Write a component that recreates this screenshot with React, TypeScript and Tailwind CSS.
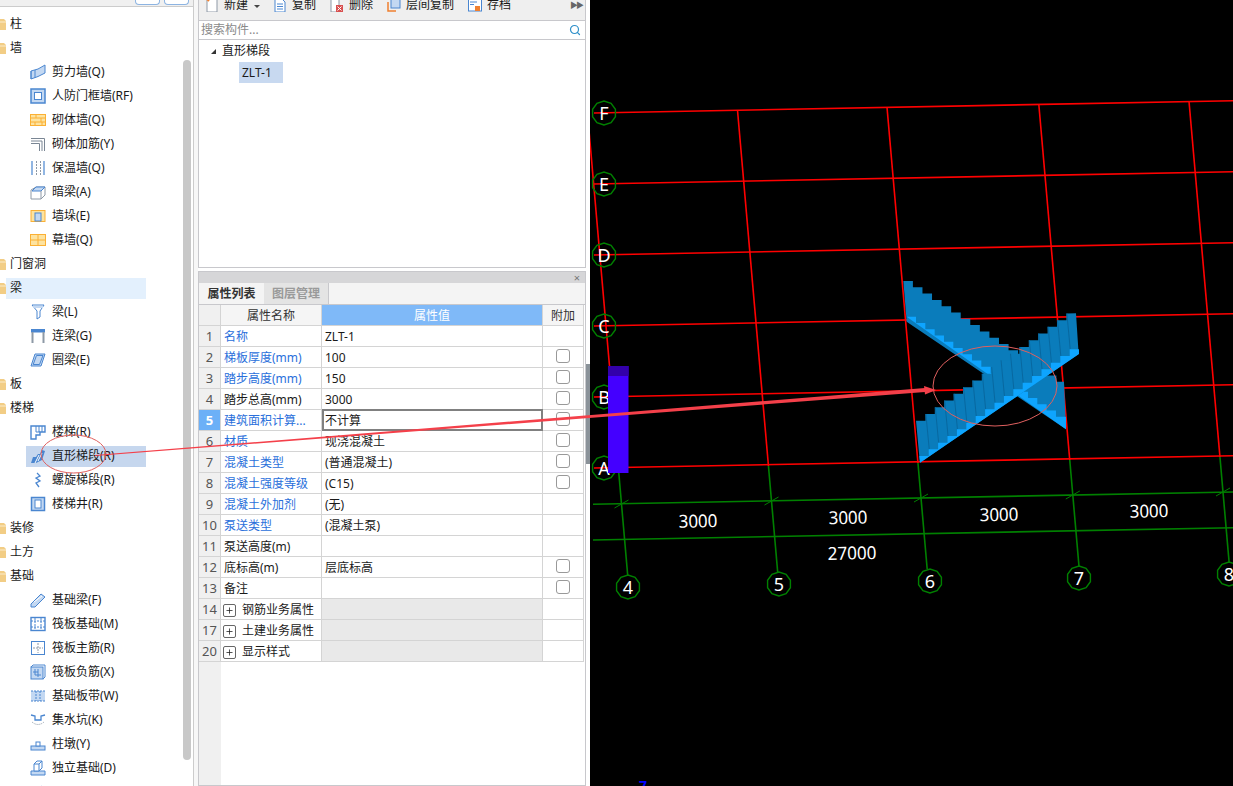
import React from 'react';
import { Search, Plus } from 'lucide-react';

const B = '#4a86d0';
const L = '#c3d8f2';
const Y = '#fbb034';
const P = '#fde3a0';
const G = '#8e99a6';

// little tree icons, all on a 16 box
const icons: Record<string, React.ReactNode> = {
  shear: <><path d="M1 7 Q8 6 15 1 V9 Q8 13 1 15Z" fill={L} stroke={B} /><path d="M1 7 V15 M5 6 V14" stroke={B} fill="none" /></>,
  door: <><rect x="1" y="1" width="14" height="14" fill={L} stroke={B} strokeWidth="1.5" /><rect x="4.5" y="4.5" width="7" height="7" fill="#fff" stroke={B} /></>,
  brick: <><rect x="0.5" y="2.5" width="15" height="11" fill={P} stroke={Y} /><path d="M1 6 H15 M1 10 H15 M6 3 V6 M11 6 V10 M5 10 V13 M12 10 V13" stroke={Y} fill="none" /></>,
  rebar: <path d="M1 2.5 H14.5 V15 M1 5 H12 V15 M1 7.5 H9.5 V15" stroke="#7a8694" fill="none" />,
  insul: <><path d="M2 1 V15 M14 1 V15" stroke={B} strokeWidth="1.2" fill="none" /><path d="M6.5 1 V15 M10.5 1 V15" stroke={G} strokeDasharray="2 1" fill="none" /></>,
  hidden: <><path d="M1 6 L6 3 H15 V11 L11 15 H1Z" fill="#fff" stroke={G} /><path d="M6 3 H15 L11 7 H2Z" fill={L} stroke={B} /><path d="M11 7 V15" stroke={G} /></>,
  pier: <><rect x="1" y="2.5" width="14" height="11" fill={P} stroke={Y} /><rect x="5" y="5" width="6" height="8" fill={L} stroke={B} /></>,
  curtain: <><rect x="0.5" y="2.5" width="15" height="11" fill={P} stroke={Y} /><path d="M1 8 H15 M8 3 V13" stroke={Y} /></>,
  beam: <><path d="M2 1 H14 L10 7 V13 L7 15 V7Z" fill="#fff" stroke={B} /><path d="M3 3 H13" stroke={L} strokeWidth="2" /></>,
  link: <><rect x="1" y="1" width="14" height="3.5" fill={B} /><path d="M2.5 4 V15 M13.5 4 V15" stroke={G} strokeWidth="2" /></>,
  ring: <path d="M5 2 H15 L11 14 H1Z M6.5 3.5 H13 L9.5 12.5 H3.2Z" fill={L} stroke={B} />,
  stair: <><path d="M1 2 H15 V8 H10 V11 H6 V15 H1Z" fill="#fff" stroke={B} strokeWidth="1.4" /><path d="M6 2 V8 H10 M9 2 V8 M12 2 V8" stroke={B} fill="none" /></>,
  straight: <><path d="M1 15 L3 9 H6 L8 6 H10 L12 2 L15 3 L12 12 L6 15Z" fill={B} /><path d="M5 15 L9 7 M8 13 L12 5" stroke="#fff" /></>,
  spiral: <path d="M7 1 L10 4 L6 6 L10 9 L6 11 L9 15" stroke={B} strokeWidth="1.3" fill="none" />,
  well: <><rect x="1.5" y="1.5" width="13" height="13" fill={L} stroke={B} strokeWidth="1.5" /><rect x="5" y="4" width="6" height="8" fill="#fff" stroke={B} /></>,
  found: <><path d="M1 12 L11 2 L15 5 L5 15 H1Z" fill={L} stroke={B} /><path d="M4 10 L12 4" stroke="#fff" /></>,
  raft: <><rect x="1" y="1.5" width="14" height="13" fill="#fff" stroke={B} strokeWidth="1.4" /><path d="M1 5 H15 M1 11 H15 M5 2 V14 M11 2 V14" stroke={B} strokeDasharray="2 1" /></>,
  main: <><rect x="1.5" y="1.5" width="13" height="13" fill="#fff" stroke={B} /><path d="M8 3 V13 M3 8 H13" stroke={G} strokeDasharray="2 1" /></>,
  neg: <><rect x="1" y="3" width="12" height="12" fill={L} stroke={B} /><path d="M1 3 L3 1 H15 V13 L13 15 M5 5 V11 H11 M8 5 V13 M3 8 H8" stroke={B} fill="none" /></>,
  strip: <><rect x="1" y="3" width="14" height="10" fill={L} /><path d="M1 3 H15 M1 13 H15 M6 3 V13 M10 3 V13" stroke={B} strokeDasharray="2 1" /></>,
  sump: <><path d="M1 3 L5 4 V8 H11 V4 L15 3" stroke={B} strokeWidth="1.3" fill="none" /><path d="M2 10 Q8 15 14 10" stroke={G} strokeDasharray="1 1" fill="none" /></>,
  cap: <><rect x="1" y="10" width="14" height="4" fill={L} stroke={B} /><rect x="6" y="6" width="4" height="4" fill="#fff" stroke={B} /></>,
  iso: <><path d="M1 11 H15 V15 H1Z" fill={L} stroke={B} /><path d="M4 11 V4 L7 1 H12 V8 L9 11Z M4 4 H9 V11 M9 4 L12 1" fill="#fff" stroke={B} /></>,
};

const tree: { t: string; i?: string; sel?: boolean; open?: boolean }[] = [
  { t: '柱' }, { t: '墙', open: true },
  { t: '剪力墙(Q)', i: 'shear' }, { t: '人防门框墙(RF)', i: 'door' }, { t: '砌体墙(Q)', i: 'brick' }, { t: '砌体加筋(Y)', i: 'rebar' },
  { t: '保温墙(Q)', i: 'insul' }, { t: '暗梁(A)', i: 'hidden' }, { t: '墙垛(E)', i: 'pier' }, { t: '幕墙(Q)', i: 'curtain' },
  { t: '门窗洞' }, { t: '梁', open: true, sel: true },
  { t: '梁(L)', i: 'beam' }, { t: '连梁(G)', i: 'link' }, { t: '圈梁(E)', i: 'ring' },
  { t: '板' }, { t: '楼梯', open: true },
  { t: '楼梯(R)', i: 'stair' }, { t: '直形梯段(R)', i: 'straight', sel: true }, { t: '螺旋梯段(R)', i: 'spiral' }, { t: '楼梯井(R)', i: 'well' },
  { t: '装修' }, { t: '土方' }, { t: '基础', open: true },
  { t: '基础梁(F)', i: 'found' }, { t: '筏板基础(M)', i: 'raft' }, { t: '筏板主筋(R)', i: 'main' }, { t: '筏板负筋(X)', i: 'neg' },
  { t: '基础板带(W)', i: 'strip' }, { t: '集水坑(K)', i: 'sump' }, { t: '柱墩(Y)', i: 'cap' }, { t: '独立基础(D)', i: 'iso' },
  { t: '', i: 'found' },
];

const rows: { n: number; name: string; val: string; blue?: boolean; check?: boolean; group?: boolean; active?: boolean }[] = [
  { n: 1, name: '名称', val: 'ZLT-1', blue: true },
  { n: 2, name: '梯板厚度(mm)', val: '100', blue: true, check: true },
  { n: 3, name: '踏步高度(mm)', val: '150', blue: true, check: true },
  { n: 4, name: '踏步总高(mm)', val: '3000', check: true },
  { n: 5, name: '建筑面积计算...', val: '不计算', blue: true, check: true, active: true },
  { n: 6, name: '材质', val: '现浇混凝土', blue: true, check: true },
  { n: 7, name: '混凝土类型', val: '(普通混凝土)', blue: true, check: true },
  { n: 8, name: '混凝土强度等级', val: '(C15)', blue: true, check: true },
  { n: 9, name: '混凝土外加剂', val: '(无)', blue: true },
  { n: 10, name: '泵送类型', val: '(混凝土泵)', blue: true },
  { n: 11, name: '泵送高度(m)', val: '' },
  { n: 12, name: '底标高(m)', val: '层底标高', check: true },
  { n: 13, name: '备注', val: '', check: true },
  { n: 14, name: '钢筋业务属性', val: '', group: true },
  { n: 17, name: '土建业务属性', val: '', group: true },
  { n: 20, name: '显示样式', val: '', group: true },
];

function Folder() {
  return (
    <svg width="6" height="12" viewBox="0 0 6 12" className="shrink-0">
      <path d="M0 1 H4 L6 3 V12 H0Z" fill="#f2cd85" />
      <path d="M0 4 H6" stroke="#fbeccb" />
    </svg>
  );
}

function TreeRow({ item }: { item: (typeof tree)[number] }) {
  if (!item.i) {
    return (
      <div className="h-6 flex items-center shrink-0">
        <Folder />
        <div className={`h-[21px] w-[140px] flex items-center pl-1 ${item.sel ? 'bg-[#e3f0fd]' : ''}`}>{item.t}</div>
      </div>
    );
  }
  return (
    <div className="h-6 flex items-center pl-[26px] shrink-0">
      <div className={`h-[21px] w-[120px] flex items-center gap-[6px] pl-1 whitespace-nowrap ${item.sel ? 'bg-[#c6d7ee]' : ''}`}>
        <svg width="16" height="16" viewBox="0 0 16 16" className="shrink-0">{icons[item.i]}</svg>
        <span>{item.t}</span>
      </div>
    </div>
  );
}

function ToolBtn({ icon, label, w }: { icon: React.ReactNode; label: string; w: string }) {
  return (
    <div className={`flex items-center gap-[5px] shrink-0 ${w}`}>
      <svg width="14" height="14" viewBox="0 0 14 14" className="shrink-0">{icon}</svg>
      <span>{label}</span>
    </div>
  );
}

function Cell({ className, children }: { className: string; children?: React.ReactNode }) {
  return <div className={`border-r border-[#d4d4d4] flex items-center shrink-0 pt-[2px] ${className}`}>{children}</div>;
}

function stepped(x0: number, y0: number, dx: number, dy: number, n: number, dir: 1 | -1) {
  const pts: string[] = [`${x0},${y0}`];
  for (let i = 0; i < n; i++) {
    const x = x0 + dx * (i + 1);
    pts.push(`${x},${y0 + dir * dy * i}`, `${x},${y0 + dir * dy * (i + 1)}`);
  }
  return pts;
}

const DARK = '#0a7cbb';
const LIGHT = '#0ea5ff';

function Stairs() {
  const s1 = [...stepped(40, 33, 28.7, 18.9, 16, 1), '522,335', '528,478', '50,155'].join(' ');
  const s1b = [...stepped(50, 140, 28, 18.75, 16, 1), '528,440', '528,478'].join(' ');
  const s2 = [...stepped(78, 452, 28.2, 20.1, 16, -1), '558,130', '566,252', '90,578', '88,560'].join(' ');
  const s2b = [...stepped(88, 558, 28.2, 20, 16, -1), '567,238', '567,252', '90,578'].join(' ');
  const strips = Array.from({ length: 16 }, (_, k) => {
    const x = 78 + 28.2 * (k + 1);
    const top = 452 - 20.1 * (k + 1);
    const bot = 558 - 20 * (k + 1);
    return `${x},${top} ${x + 3},${top} ${x + 13},${bot} ${x + 10},${bot}`;
  });
  return (
    <g transform="translate(890 270) scale(0.3333)">
      <polygon points={s1} fill={DARK} />
      <polygon points={s1b} fill={LIGHT} />
      <polygon points={s2} fill={DARK} />
      {strips.map((p) => <polygon key={p} points={p} fill="#0868a0" />)}
      <polygon points={s2b} fill={LIGHT} />
    </g>
  );
}

function Bubble({ x, y, label }: { x: number; y: number; label: string }) {
  const pts = Array.from({ length: 10 }, (_, i) => {
    const a = (Math.PI * 2 * i) / 10 + Math.PI / 2;
    return `${x + 12 * Math.cos(a)},${y + 12 * Math.sin(a)}`;
  }).join(' ');
  return (
    <g>
      <polygon points={pts} fill="none" stroke="#008000" strokeWidth="1.4" />
      <text x={x} y={y + 6.5} textAnchor="middle" fill="#fff" fontSize="18">{label}</text>
    </g>
  );
}

function Canvas() {
  const hs: [string, number][] = [['F', 113], ['E', 184], ['D', 255], ['C', 326], ['B', 397], ['A', 468]];
  const vs: [string, number, number][] = [['4', 621.5, 504], ['5', 771.5, 501], ['6', 921, 498], ['7', 1072.8, 495], ['8', 1223, 492]];
  const at = (x0: number, y0: number, y: number) => x0 + 0.087 * (y - y0);
  return (
    <svg width="643" height="786" viewBox="590 0 643 786" className="shrink-0 block bg-black">
      {hs.map(([, y]) => <line key={y} x1="594" y1={y} x2="1233" y2={y - 12.3} stroke="#ff0000" strokeWidth="1.6" />)}
      {vs.map(([l, x, y]) => (
        <g key={l}>
          <line x1={at(x, y, y - 391)} y1={y - 391} x2={at(x, y, y - 35)} y2={y - 35} stroke="#ff0000" strokeWidth="1.6" />
          <line x1={at(x, y, y - 35)} y1={y - 35} x2={at(x, y, y + 71)} y2={y + 71} stroke="#008000" strokeWidth="1.6" />
          <line x1={x - 7} y1={y + 4} x2={x + 7} y2={y - 4} stroke="#008000" />
        </g>
      ))}
      <line x1="593" y1="504.3" x2="1233" y2="492" stroke="#008000" strokeWidth="1.6" />
      <line x1="593" y1="540" x2="1233" y2="527.7" stroke="#008000" strokeWidth="1.6" />
      {hs.map(([l, y]) => <Bubble key={l} x={604} y={y} label={l} />)}
      {[['4', 628, 587], ['5', 779, 584], ['6', 930, 581], ['7', 1079, 578], ['8', 1229, 574]].map(([l, x, y]) => (
        <Bubble key={l as string} x={x as number} y={y as number} label={l as string} />
      ))}
      {[[698, 521], [848, 517.5], [999, 514.5], [1149, 511]].map(([x, y]) => (
        <text key={x} x={x} y={y + 6.5} textAnchor="middle" fill="#fff" fontSize="18" textLength="39" lengthAdjust="spacingAndGlyphs" transform={`rotate(-1.1 ${x} ${y})`}>3000</text>
      ))}
      <text x="852" y="559.5" textAnchor="middle" fill="#fff" fontSize="18" textLength="49" lengthAdjust="spacingAndGlyphs" transform="rotate(-1.1 852 553)">27000</text>
      <Stairs />
      <rect x="608" y="366" width="20.5" height="107" fill="#4400ff" />
      <rect x="608" y="366" width="20.5" height="10" fill="#3300aa" />
      <text x="643" y="791" textAnchor="middle" fill="#0000ff" fontSize="14" fontWeight="700">7</text>
    </svg>
  );
}

export default function App() {
  return (
    <div className="relative w-[1233px] h-[786px] overflow-hidden flex bg-white text-[12px] text-[#1a1a1a] font-['Noto_Sans','Noto_Sans_CJK_SC',sans-serif]">
      {/* Left tree */}
      <div className="w-[194px] h-full border-r border-[#cccccc] flex flex-col shrink-0">
        <div className="h-[7px] bg-[#f0f0f0] border-b border-[#cccccc] flex justify-end gap-1 pr-1 shrink-0">
          <div className="w-[25px] h-[5px] border border-t-0 border-[#8db4e2] rounded-b bg-white" />
          <div className="w-[25px] h-[5px] border border-t-0 border-[#8db4e2] rounded-b bg-white" />
        </div>
        <div className="flex-1 flex min-h-0">
          <div className="w-[183px] pt-[5px] overflow-hidden flex flex-col shrink-0">
            {tree.map((item, i) => <TreeRow key={i} item={item} />)}
          </div>
          <div className="pt-[53px] pb-[26px] flex">
            <div className="w-2 h-full rounded bg-[#c8c8c8]" />
          </div>
        </div>
      </div>

      {/* Middle panels */}
      <div className="w-[396px] h-full flex shrink-0">
        <div className="w-1 bg-[#f7f7f7] shrink-0" />
        <div className="w-[388px] flex flex-col shrink-0">
          <div className="h-[268px] border border-t-0 border-[#c8c8cc] flex flex-col shrink-0">
            <div className="h-[21px] bg-[#efefef] border-b border-[#c8c8cc] flex items-center pl-[6px] pb-[10px] shrink-0 whitespace-nowrap">
              <ToolBtn w="w-[68px]" label="新建" icon={<><path d="M2 1 H12 V14 H2Z" fill="#fff" stroke={G} /><path d="M1 0 L4 3" stroke="#f08030" strokeWidth="2" /></>} />
              <div className="w-0 h-0 border-x-[3px] border-x-transparent border-t-[3px] border-t-[#444] absolute left-[254px] top-[5px]" />
              <ToolBtn w="w-[57px]" label="复制" icon={<><path d="M2 1 H9 L12 4 V14 H2Z" fill="#fff" stroke={B} /><path d="M4 6 H10 M4 8.5 H10 M4 11 H10" stroke={B} /></>} />
              <ToolBtn w="w-[57px]" label="删除" icon={<><path d="M1 1 H9 V14 H1Z" fill="#fff" stroke={G} /><rect x="6" y="7" width="7" height="7" fill="#d85050" /><path d="M7.5 8.5 L11.5 12.5 M11.5 8.5 L7.5 12.5" stroke="#fff" /></>} />
              <ToolBtn w="w-[81px]" label="层间复制" icon={<><path d="M1 4 V13 H9" stroke="#f08030" strokeWidth="1.5" fill="none" /><rect x="4" y="1" width="9" height="9" fill={L} stroke={B} /></>} />
              <ToolBtn w="w-[60px]" label="存档" icon={<><rect x="0.5" y="1" width="13" height="12" fill="#fff" stroke={B} /><path d="M2 4 H9 M2 6.5 H6" stroke={B} /><rect x="7" y="8" width="5" height="5" fill="#f08030" /></>} />
              <span className="ml-auto mr-[3px] text-[#666] text-[8px] tracking-[-2px]">▶▶</span>
            </div>
            <div className="h-[19px] border-b border-[#c8c8cc] flex items-center justify-between pl-[2px] pr-1 text-[#8a8a8a] shrink-0">
              <span>搜索构件...</span>
              <Search size={12} strokeWidth={2.4} className="text-[#2e8fc9]" />
            </div>
            <div className="flex-1 pt-[1px]">
              <div className="h-5 flex items-center pl-[11px]">
                <svg width="7" height="7" viewBox="0 0 7 7" className="mr-[5px] shrink-0"><path d="M6 1 V6 H1Z" fill="#333" /></svg>
                <span>直形梯段</span>
              </div>
              <div className="ml-[40px] mt-[1px] w-[44px] h-[21px] bg-[#c8d9f0] flex items-center pl-[3px]">ZLT-1</div>
            </div>
          </div>
          <div className="h-[3px] shrink-0" />
          <div className="flex-1 min-h-0 border border-[#c8c8cc] flex flex-col">
            <div className="h-[11px] bg-[#d6d6d8] flex items-center justify-end pr-[5px] text-[#777] text-[11px] leading-none shrink-0">×</div>
            <div className="h-[22px] bg-[#f4f4f4] border-b border-[#c8c8cc] flex shrink-0">
              <div className="w-[65px] flex items-center justify-center font-semibold text-[#333]">属性列表</div>
              <div className="w-[65px] flex items-center justify-center bg-[#e4e4e4] text-[#9a9a9a] font-semibold border-r border-[#c8c8cc]">图层管理</div>
            </div>
            {/* Property table */}
            <div className="w-[385px] flex flex-col flex-1 min-h-0">
              <div className="h-[21px] flex border-b border-[#d4d4d4] shrink-0">
                <Cell className="w-[22px] bg-[#f0f0f0]" />
                <Cell className="w-[101px] bg-[#f5f5f5] justify-center text-[#333]">属性名称</Cell>
                <Cell className="w-[221px] bg-[#7fb9f8] justify-center text-white">属性值</Cell>
                <Cell className="w-[41px] bg-[#f5f5f5] justify-center text-[#333]">附加</Cell>
              </div>
              {rows.map((r) => (
                <div key={r.n} className="h-[21px] flex border-b border-[#d4d4d4] shrink-0">
                  <Cell className={`w-[22px] justify-center text-[13px] ${r.active ? 'bg-[#6cb0f7] text-white font-bold' : 'bg-[#f0f0f0] text-[#555]'}`}>{r.n}</Cell>
                  {r.group ? (
                    <>
                      <Cell className="w-[101px] pl-[2px] whitespace-nowrap">
                        <span className="w-[13px] h-[13px] border border-[#666] rounded-[2px] flex items-center justify-center mr-[6px] shrink-0">
                          <Plus size={9} strokeWidth={2} />
                        </span>
                        {r.name}
                      </Cell>
                      <Cell className="w-[221px] bg-[#e9e9e9]" />
                    </>
                  ) : (
                    <>
                      <Cell className={`w-[101px] pl-[3px] whitespace-nowrap ${r.blue ? 'text-[#2a6fdb]' : ''}`}>{r.name}</Cell>
                      {r.active ? (
                        <div className="w-[221px] h-[22px] -mt-[1px] border-2 border-[#808080] flex items-center pl-[1px] pt-[2px] bg-white shrink-0">{r.val}</div>
                      ) : (
                        <Cell className="w-[221px] pl-[3px]">{r.val}</Cell>
                      )}
                    </>
                  )}
                  <Cell className="w-[41px] justify-center">
                    {r.check && <span className="w-[14px] h-[14px] border border-[#999] rounded-[3px] mb-[5px] bg-white" />}
                  </Cell>
                </div>
              ))}
              <div className="w-[22px] flex-1 bg-[#f0f0f0]" />
            </div>
          </div>
        </div>
        <div className="w-1 shrink-0 flex flex-col">
          <div className="h-[364px] shrink-0" />
          <div className="h-[100px] bg-[#8a9299] shrink-0" />
        </div>
      </div>

      <Canvas />

      {/* Red annotation on top of everything */}
      <svg width="1233" height="786" viewBox="0 0 1233 786" className="absolute inset-0 pointer-events-none">
        <ellipse cx="73.5" cy="454" rx="32.5" ry="19" fill="none" stroke="#e0605f" />
        <ellipse cx="995" cy="386" rx="62" ry="40" fill="none" stroke="#e0605f" />
        <polygon points="95,455 925,388 925,392 95,456" fill="#f4404a" />
        <polygon points="936,390 924,386 925,394.5" fill="#f4404a" />
      </svg>
    </div>
  );
}
